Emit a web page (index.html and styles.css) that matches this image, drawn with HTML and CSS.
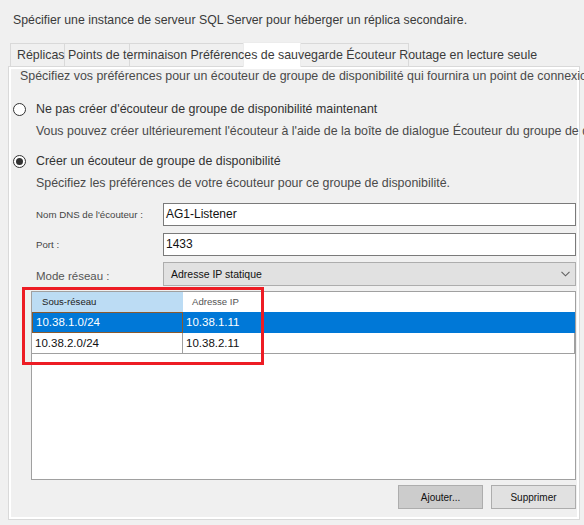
FILE: index.html
```html
<!DOCTYPE html>
<html lang="fr">
<head>
<meta charset="utf-8">
<title>Écouteur</title>
<link rel="stylesheet" href="styles.css">
</head>
<body>
<div class="page">
  <p class="title">Spécifier une instance de serveur SQL Server pour héberger un réplica secondaire.</p>
  <div class="tabs">
    <div class="tab t1"></div>
    <div class="tab t2"></div>
    <div class="tab t3"></div>
    <div class="tab active t4"></div>
    <div class="tab t5"></div>
    <div class="tab-labels">Réplicas Points de terminaison Préférences de sauvegarde Écouteur Routage en lecture seule</div>
  </div>
  <div class="panel">
    <p class="intro">Spécifiez vos préférences pour un écouteur de groupe de disponibilité qui fournira un point de connexion client.</p>
    <div class="radio-row first">
      <span class="radio"></span>
      <span class="radio-label">Ne pas créer d'écouteur de groupe de disponibilité maintenant</span>
    </div>
    <p class="hint">Vous pouvez créer ultérieurement l'écouteur à l'aide de la boîte de dialogue Écouteur du groupe de disponibilité.</p>
    <div class="radio-row second">
      <span class="radio checked"></span>
      <span class="radio-label">Créer un écouteur de groupe de disponibilité</span>
    </div>
    <p class="hint">Spécifiez les préférences de votre écouteur pour ce groupe de disponibilité.</p>

    <div class="form-row r1">
      <span class="field-label">Nom DNS de l'écouteur :</span>
      <div class="input">AG1-Listener</div>
    </div>
    <div class="form-row r2">
      <span class="field-label">Port :</span>
      <div class="input">1433</div>
    </div>
    <div class="form-row r3">
      <span class="field-label mode">Mode réseau :</span>
      <div class="select">
        <span>Adresse IP statique</span>
        <svg class="chev" width="9" height="6" viewBox="0 0 9 6"><polyline points="0.5,0.8 4.5,4.8 8.5,0.8" fill="none" stroke="#606060" stroke-width="1.1"/></svg>
      </div>
    </div>

    <div class="grid">
      <div class="grid-row head">
        <div class="cell c1">Sous-réseau</div>
        <div class="cell c2">Adresse IP</div>
      </div>
      <div class="grid-row sel">
        <div class="cell c1">10.38.1.0/24</div>
        <div class="cell c2">10.38.1.11</div>
      </div>
      <div class="grid-row">
        <div class="cell c1">10.38.2.0/24</div>
        <div class="cell c2">10.38.2.11</div>
      </div>
      <div class="highlight"></div>
    </div>

    <div class="buttons">
      <button class="btn add">Ajouter...</button>
      <button class="btn">Supprimer</button>
    </div>
  </div>
</div>
</body>
</html>
```
FILE: styles.css
```css
* { box-sizing: border-box; }
html, body {
  margin: 0;
  padding: 0;
  background: #f0f0f0;
  overflow: hidden;
}
body {
  width: 584px;
  height: 525px;
  font-family: "Liberation Sans", Arial, sans-serif;
  font-size: 12.4px;
  color: #333;
}
.page {
  padding-top: 13px;
}
p { margin: 0; }
.title {
  margin-left: 13px;
  line-height: 14px;
  font-size: 12.3px;
  color: #3a3a3a;
  white-space: nowrap;
}

/* tabs */
.tabs {
  position: relative;
  display: flex;
  align-items: flex-end;
  height: 24px;
  margin-top: 15px;
  margin-left: 10px;
}
.tab {
  height: 23px;
  background: #f0f0f0;
  border: 1px solid #d9d9d9;
  border-bottom: none;
  margin-left: -1px;
}
.tab.t1 { width: 55px; margin-left: 0; }
.tab.t2 { width: 66px; }
.tab.t3 { width: 115px; }
.tab.t4 { width: 58px; }
.tab.t5 { width: 109px; }
.tab.active {
  height: 25px;
  margin-bottom: -1px;
  background: #fff;
  border-color: #ececec;
  position: relative;
  z-index: 1;
}
.tab-labels {
  position: absolute;
  left: 7px;
  top: 6px;
  z-index: 2;
  white-space: nowrap;
  line-height: 14px;
  color: #3a3a3a;
}

/* panel */
.panel {
  margin-left: 8px;
  width: 572px;
  height: 454px;
  border: 1px solid #d9d9d9;
  box-shadow: inset 0 0 0 2px #fff;
  background: #f0f0f0;
  padding-top: 2px;
  white-space: nowrap;
}
.intro {
  line-height: 14px;
  padding-left: 11px;
  color: #4a4a4a;
}
.radio-row {
  display: flex;
  align-items: center;
  gap: 10px;
  height: 14px;
  padding-left: 4px;
}
.radio-row.first { margin-top: 19px; }
.radio-row.second { margin-top: 16px; }
.radio {
  width: 13px;
  height: 13px;
  border: 1px solid #333;
  border-radius: 50%;
  background: #fff;
  flex: none;
  display: flex;
  align-items: center;
  justify-content: center;
}
.radio.checked::after {
  content: "";
  width: 7px;
  height: 7px;
  border-radius: 50%;
  background: #333;
}
.radio-label {
  color: #333;
  line-height: 14px;
}
.hint {
  margin-top: 8px;
  line-height: 14px;
  padding-left: 27px;
  color: #4a4a4a;
}

/* form */
.form-row {
  display: flex;
  align-items: center;
  padding-left: 27px;
  height: 23px;
}
.form-row.r1 { margin-top: 13px; }
.form-row.r2 { margin-top: 7px; }
.form-row.r3 { margin-top: 6px; height: 24px; }
.field-label {
  width: 127px;
  font-size: 9.7px;
  color: #444;
  flex: none;
}
.field-label.mode {
  font-size: 11.5px;
  color: #555;
  margin-top: 4px;
}
.input {
  width: 413px;
  height: 23px;
  border: 1px solid #7a7a7a;
  background: #fff;
  padding-left: 2px;
  line-height: 21px;
  color: #111;
  font-size: 12px;
}
.select {
  width: 413px;
  height: 24px;
  border: 1px solid #adadad;
  background: #e1e1e1;
  padding-left: 7px;
  padding-right: 5px;
  display: flex;
  align-items: center;
  justify-content: space-between;
  font-size: 10.5px;
  color: #111;
}

/* grid */
.grid {
  position: relative;
  margin-top: 5px;
  margin-left: 22px;
  width: 545px;
  height: 189px;
  border: 1px solid #a0a0a0;
  background: #fff;
}
.grid-row {
  display: flex;
  height: 21px;
}
.grid-row.head { height: 20px; }
.cell {
  border-right: 1px solid #a0a0a0;
  border-bottom: 1px solid #a0a0a0;
  font-size: 11.5px;
  line-height: 20px;
  padding-left: 3px;
  color: #111;
}
.cell.c1 { width: 151px; }
.cell.c2 { width: 392px; }
.grid-row.head .cell {
  border: none;
  font-size: 9.6px;
  line-height: 20px;
}
.grid-row.head .c1 {
  background: #bcdcf4;
  padding-left: 10px;
  color: #222;
}
.grid-row.head .c2 {
  background: #fff;
  padding-left: 9px;
  color: #555;
}
.grid-row.sel .cell {
  background: #0078d7;
  color: #fff;
  border-color: #0078d7;
}
.grid-row.sel .c1 {
  border: 1px solid #8a5a2e;
  line-height: 19px;
  padding-left: 3px;
}
.highlight {
  position: absolute;
  left: -10px;
  top: -5px;
  width: 242px;
  height: 78px;
  border: 3px solid #ed1c24;
  pointer-events: none;
}

/* buttons */
.buttons {
  display: flex;
  justify-content: flex-end;
  gap: 8px;
  margin-top: 5px;
  padding-right: 3px;
}
.btn {
  width: 85px;
  height: 24px;
  border: 1px solid #adadad;
  background: #e1e1e1;
  font-family: "Liberation Sans", Arial, sans-serif;
  font-size: 10px;
  color: #111;
  padding: 0;
}
.btn.add { background: #cccccc; }
```
